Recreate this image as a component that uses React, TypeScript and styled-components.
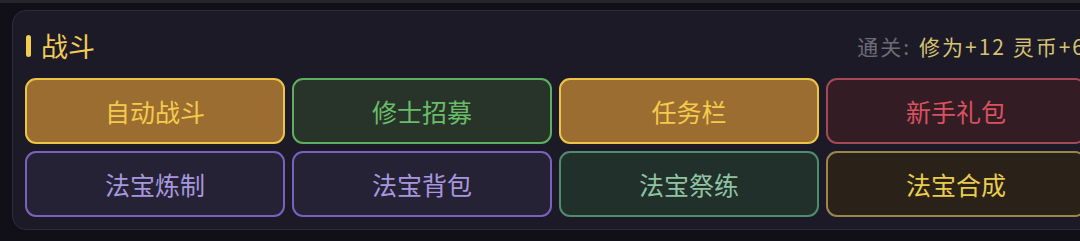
import React from "react";
import styled, { createGlobalStyle } from "styled-components";

const Global = createGlobalStyle`
  html, body {
    margin: 0;
    padding: 0;
    background: #110f18;
    overflow: hidden;
    font-family: "Noto Sans CJK SC", "Noto Sans", sans-serif;
  }
`;

const Page = styled.div`
  width: 1080px;
  height: 241px;
  overflow: hidden;
  background: #110f18;
`;

const TopStrip = styled.div`
  height: 3px;
  background: #26242f;
`;

const Card = styled.section`
  margin: 7px 0 0 12px;
  width: 1087px;
  box-sizing: border-box;
  background: #1c1a27;
  border: 1px solid #2e2c3b;
  border-radius: 14px;
  padding: 20px 12px 12px;
`;

const Header = styled.div`
  display: flex;
  align-items: center;
  justify-content: space-between;
  height: 30px;
  margin-bottom: 17px;
`;

const Title = styled.div`
  display: flex;
  align-items: center;
  gap: 10px;
  padding-left: 1px;
  color: #f1cb58;
  font-size: 27px;
  line-height: 30px;
`;

const Pill = styled.span`
  width: 5px;
  height: 22px;
  border-radius: 3px;
  background: #f2cd4e;
`;

const Reward = styled.div`
  font-size: 21px;
  color: #d6c273;
  white-space: nowrap;
  letter-spacing: 2px;
`;

const Muted = styled.span`
  color: #6d6b77;
  margin-right: 8px;
`;

const Grid = styled.div`
  display: grid;
  grid-template-columns: repeat(4, 260px);
  grid-auto-rows: 66px;
  gap: 7px;
`;

type Tone = { bg: string; border: string; color: string };

const tones: Record<string, Tone> = {
  gold: { bg: "#9c6d31", border: "#ecc447", color: "#f3cb4d" },
  green: { bg: "#28342a", border: "#5daf5f", color: "#69bd66" },
  red: { bg: "#331c24", border: "#a44a56", color: "#d9525f" },
  purple: { bg: "#262236", border: "#7862bd", color: "#a797de" },
  teal: { bg: "#22302b", border: "#4e8c6c", color: "#8fc3a2" },
  amber: { bg: "#2a2219", border: "#9d8550", color: "#ebcd4e" },
};

const ActionButton = styled.button<{ $tone: Tone }>`
  box-sizing: border-box;
  background: ${(p) => p.$tone.bg};
  border: 2px solid ${(p) => p.$tone.border};
  border-radius: 11px;
  color: ${(p) => p.$tone.color};
  font-family: "Noto Sans CJK SC", "Noto Sans", sans-serif;
  font-size: 25px;
  display: flex;
  align-items: center;
  justify-content: center;
  padding: 0;
  cursor: pointer;
`;

const buttons: { label: string; tone: keyof typeof tones }[] = [
  { label: "自动战斗", tone: "gold" },
  { label: "修士招募", tone: "green" },
  { label: "任务栏", tone: "gold" },
  { label: "新手礼包", tone: "red" },
  { label: "法宝炼制", tone: "purple" },
  { label: "法宝背包", tone: "purple" },
  { label: "法宝祭练", tone: "teal" },
  { label: "法宝合成", tone: "amber" },
];

export default function App() {
  return (
    <>
      <Global />
      <Page>
        <TopStrip />
        <Card>
          <Header>
            <Title>
              <Pill />
              战斗
            </Title>
            <Reward>
              <Muted>通关:</Muted>修为+12 灵币+6
            </Reward>
          </Header>
          <Grid>
            {buttons.map((b) => (
              <ActionButton key={b.label} $tone={tones[b.tone]}>
                {b.label}
              </ActionButton>
            ))}
          </Grid>
        </Card>
      </Page>
    </>
  );
}
